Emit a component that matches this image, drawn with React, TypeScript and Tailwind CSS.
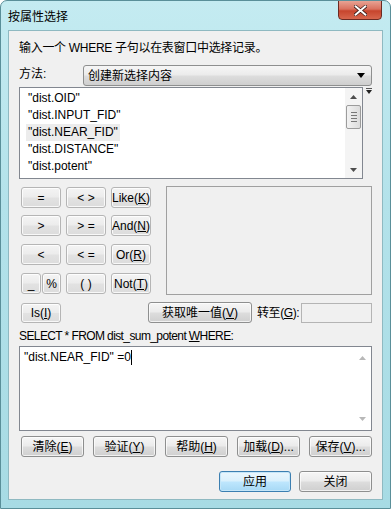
import React from 'react';

const FONT = { fontFamily: '"Liberation Sans", "Noto Sans CJK SC", sans-serif' };

const btn =
  'flex items-center justify-center whitespace-nowrap border border-[#8e8f8f] rounded-[3px] bg-[linear-gradient(to_bottom,#f6f6f6_0%,#ebebeb_48%,#dddddd_52%,#cfcfcf_100%)] text-[12px] text-black shadow-[inset_0_0_0_1px_rgba(255,255,255,0.7)]';

const opBtn =
  'flex items-center justify-center whitespace-nowrap border border-[#b5b5b5] rounded-[3px] bg-[linear-gradient(to_bottom,#f4f4f4_0%,#ececec_48%,#e2e2e2_52%,#dcdcdc_100%)] text-[12px] text-black shadow-[inset_0_0_0_1px_rgba(255,255,255,0.8)]';

function Mn({ pre, k, post = '' }: { pre: string; k: string; post?: string }) {
  return (
    <span>
      {pre}(<span className="underline">{k}</span>){post}
    </span>
  );
}

function ArrowUp({ color = '#4d4d4d' }: { color?: string }) {
  return (
    <svg width="7" height="4" viewBox="0 0 7 4">
      <path d="M0 4 L3.5 0 L7 4 Z" fill={color} />
    </svg>
  );
}

function ArrowDown({ color = '#4d4d4d' }: { color?: string }) {
  return (
    <svg width="7" height="4" viewBox="0 0 7 4">
      <path d="M0 0 L3.5 4 L7 0 Z" fill={color} />
    </svg>
  );
}

const fields = ['"dist.OID"', '"dist.INPUT_FID"', '"dist.NEAR_FID"', '"dist.DISTANCE"', '"dist.potent"'];

export default function App() {
  return (
    <div
      style={FONT}
      className="w-[391px] h-[509px] flex flex-col rounded-t-[7px] border border-[#5a8f99] bg-[linear-gradient(to_bottom,#c4ebf1_0%,#b3e2ea_40%,#a7dbe4_100%)] overflow-hidden"
    >
      {/* Title bar */}
      <div className="h-[29px] flex items-start relative">
        <span className="ml-[7px] mt-[7px] text-[12px] text-black">按属性选择</span>
        <div className="absolute right-[8px] top-[-1px] w-[44px] h-[20px] rounded-b-[4px] border border-[#6b2a22] bg-[linear-gradient(to_bottom,#e8a394_0%,#d9715e_45%,#c7452d_55%,#d7664d_100%)] flex items-center justify-center">
          <svg width="13" height="11" viewBox="0 0 13 11">
            <path d="M1 1 L12 10 M12 1 L1 10" stroke="#3a1a16" strokeWidth="3.4" strokeLinecap="round" />
            <path d="M1.5 1.2 L11.5 9.8 M11.5 1.2 L1.5 9.8" stroke="#ffffff" strokeWidth="2" strokeLinecap="round" />
          </svg>
        </div>
      </div>

      {/* Client area */}
      <div className="mx-[7px] flex-1 bg-[#f0f0f0] border border-[#8fb9c1] flex flex-col pl-[10px] pr-[10px]">
        <div className="mt-[9px] h-[16px] text-[12px] leading-[16px] text-black whitespace-nowrap tracking-[-0.3px]">
          输入一个 WHERE 子句以在表窗口中选择记录。
        </div>

        {/* Method */}
        <div className="mt-[9px] h-[21px] flex items-center">
          <span className="w-[64px] text-[12px] text-black -mt-[3px]">方法:</span>
          <div className="flex-1 h-[21px] rounded-[3px] border border-[#8e8f8f] bg-[linear-gradient(to_bottom,#f6f6f6_0%,#ebebeb_48%,#dddddd_52%,#cfcfcf_100%)] flex items-center pl-[4px] pr-[6px]">
            <span className="flex-1 text-[12px] text-black">创建新选择内容</span>
            <svg width="8" height="5" viewBox="0 0 8 5">
              <path d="M0 0 L4 5 L8 0 Z" fill="#000" />
            </svg>
          </div>
        </div>

        {/* Field list */}
        <div className="mt-[1px] flex items-start">
          <div className="w-[346px] h-[92px] border border-[#828790] bg-white flex">
            <div className="flex-1 pl-[6px] pt-[2px] flex flex-col">
              {fields.map((f, i) => (
                <div
                  key={f}
                  className={`h-[17px] leading-[17px] text-[12px] text-black px-[2px] self-start ${i === 2 ? 'bg-[#ececec]' : ''}`}
                >
                  {f}
                </div>
              ))}
            </div>
            <div className="w-[17px] bg-[#f4f4f4] flex flex-col items-center">
              <div className="h-[17px] flex items-center justify-center">
                <ArrowUp />
              </div>
              <div className="w-[15px] h-[24px] rounded-[2px] border border-[#9c9c9c] bg-[linear-gradient(to_right,#f2f2f2,#dcdcdc)] flex flex-col items-center justify-center gap-[2px]">
                <div className="w-[6px] h-[1px] bg-[#777]" />
                <div className="w-[6px] h-[1px] bg-[#777]" />
                <div className="w-[6px] h-[1px] bg-[#777]" />
                <div className="w-[6px] h-[1px] bg-[#777]" />
              </div>
              <div className="flex-1" />
              <div className="h-[17px] flex items-center justify-center">
                <ArrowDown />
              </div>
            </div>
          </div>
          <div className="ml-[3px] mt-[1px] flex flex-col items-center">
            <div className="w-[6px] h-[1px] bg-[#555]" />
            <div className="mt-[1px]">
              <svg width="6" height="4" viewBox="0 0 6 4">
                <path d="M0 0 L3 4 L6 0 Z" fill="#222" />
              </svg>
            </div>
          </div>
        </div>

        {/* Operators + values */}
        <div className="mt-[7px] flex">
          <div className="ml-[2px] mt-[1px] w-[130px] grid grid-cols-[40px_40px_40px] gap-x-[5px] gap-y-[7px] content-start">
            <div className={`${opBtn} h-[21px]`}>=</div>
            <div className={`${opBtn} h-[21px]`}>&lt; &gt;</div>
            <div className={`${opBtn} h-[21px]`}>
              <Mn pre="Like" k="K" />
            </div>
            <div className={`${opBtn} h-[21px]`}>&gt;</div>
            <div className={`${opBtn} h-[21px]`}>&gt; =</div>
            <div className={`${opBtn} h-[21px]`}>
              <Mn pre="And" k="N" />
            </div>
            <div className={`${opBtn} h-[21px] mt-[1px]`}>&lt;</div>
            <div className={`${opBtn} h-[21px] mt-[1px]`}>&lt; =</div>
            <div className={`${opBtn} h-[21px] mt-[1px]`}>
              <Mn pre="Or" k="R" />
            </div>
            <div className="flex gap-[1px] h-[21px] mt-[1px]">
              <div className={`${opBtn} w-[20px]`}>_</div>
              <div className={`${opBtn} w-[19px] text-[11px]`}>%</div>
            </div>
            <div className={`${opBtn} h-[21px] mt-[1px]`}>( )</div>
            <div className={`${opBtn} h-[21px] mt-[1px]`}>
              <Mn pre="Not" k="T" />
            </div>
          </div>
          <div className="ml-[15px] w-[208px] h-[109px] border border-[#a0a0a0] bg-[#f0f0f0]" />
        </div>

        {/* Is / unique / goto */}
        <div className="mt-[7px] h-[21px] flex items-center">
          <div className={`${opBtn} ml-[2px] w-[40px] h-[20px]`}>
            <span>
              Is(<span className="underline">I</span>)
            </span>
          </div>
          <div className={`${btn} ml-[87px] w-[104px] h-[21px]`}>
            <span>
              获取唯一值(<span className="underline">V</span>)
            </span>
          </div>
          <span className="ml-[5px] text-[12px] text-black whitespace-nowrap tracking-[-0.4px]">
            转至(<span className="underline">G</span>):
          </span>
          <div className="ml-auto w-[71px] h-[20px] border border-[#b4b4b4] bg-[#f0f0f0]" />
        </div>

        <div className="mt-[6px] h-[14px] leading-[14px] text-[12px] text-black whitespace-nowrap tracking-[-0.6px]">
          SELECT * FROM dist_sum_potent <span className="underline">W</span>HERE:
        </div>

        {/* SQL text */}
        <div className="mt-[3px] h-[85px] border border-[#828790] bg-white flex">
          <div className="flex-1 pl-[4px] pt-[3px] text-[12px] leading-[15px] text-black flex items-start">
            <span>"dist.NEAR_FID" =0</span>
            <span className="w-[1px] h-[15px] bg-black" />
          </div>
          <div className="w-[17px] flex flex-col items-center">
            <div className="h-[22px] flex items-center justify-center">
              <ArrowUp color="#b8b8b8" />
            </div>
            <div className="flex-1" />
            <div className="h-[22px] flex items-center justify-center">
              <ArrowDown color="#b8b8b8" />
            </div>
          </div>
        </div>

        {/* Bottom buttons */}
        <div className="mt-[5px] ml-[2px] h-[21px] flex gap-[9px]">
          <div className={`${btn} w-[63px]`}>
            <span>
              清除(<span className="underline">E</span>)
            </span>
          </div>
          <div className={`${btn} w-[63px]`}>
            <span>
              验证(<span className="underline">Y</span>)
            </span>
          </div>
          <div className={`${btn} w-[63px]`}>
            <span>
              帮助(<span className="underline">H</span>)
            </span>
          </div>
          <div className={`${btn} w-[63px]`}>
            <span>
              加载(<span className="underline">D</span>)...
            </span>
          </div>
          <div className={`${btn} w-[63px]`}>
            <span>
              保存(<span className="underline">V</span>)...
            </span>
          </div>
        </div>

        <div className="mt-[14px] h-[21px] flex justify-end gap-[8px]">
          <div className="w-[72px] flex items-center justify-center rounded-[3px] border border-[#3c7fb1] bg-[linear-gradient(to_bottom,#eaf6fd_0%,#d9f0fc_48%,#bee6fd_52%,#a7d9f5_100%)] text-[12px] text-black shadow-[inset_0_0_0_1px_#c5e6f8]">
            应用
          </div>
          <div className={`${btn} w-[73px]`}>关闭</div>
        </div>
      </div>

      <div className="h-[8px]" />
    </div>
  );
}
